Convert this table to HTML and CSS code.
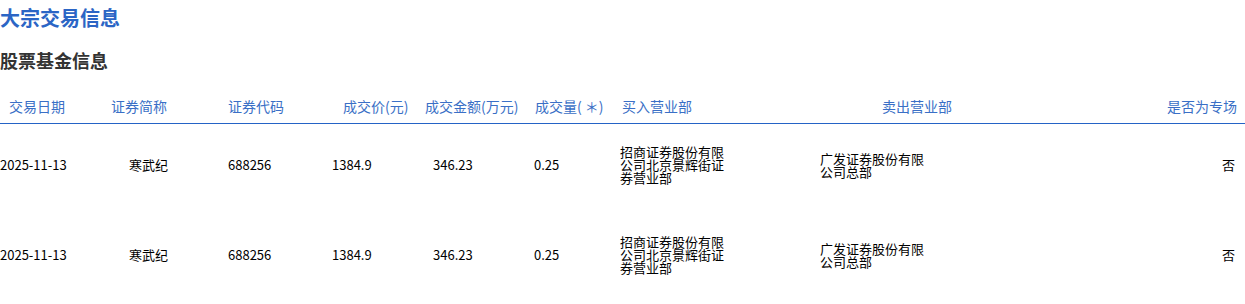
FILE: index.html
```html
<!DOCTYPE html>
<html lang="zh-CN">
<head>
<meta charset="utf-8">
<title>大宗交易信息</title>
<link rel="stylesheet" href="styles.css">
</head>
<body>
<h1 class="title">大宗交易信息</h1>
<h2 class="subtitle">股票基金信息</h2>
<table class="deals">
  <colgroup>
    <col class="w1"><col class="w2"><col class="w3"><col class="w4"><col class="w5"><col class="w6"><col class="w7"><col class="w8"><col class="w9">
  </colgroup>
  <thead>
    <tr>
      <th>交易日期</th>
      <th>证券简称</th>
      <th>证券代码</th>
      <th>成交价(元)</th>
      <th>成交金额(万元)</th>
      <th>成交量( ＊)</th>
      <th>买入营业部</th>
      <th>卖出营业部</th>
      <th>是否为专场</th>
    </tr>
  </thead>
  <tbody>
    <tr>
      <td>2025-11-13</td>
      <td>寒武纪</td>
      <td>688256</td>
      <td>1384.9</td>
      <td>346.23</td>
      <td>0.25</td>
      <td><div class="wrap">招商证券股份有限公司北京景辉街证券营业部</div></td>
      <td><div class="wrap">广发证券股份有限公司总部</div></td>
      <td>否</td>
    </tr>
    <tr>
      <td>2025-11-13</td>
      <td>寒武纪</td>
      <td>688256</td>
      <td>1384.9</td>
      <td>346.23</td>
      <td>0.25</td>
      <td><div class="wrap">招商证券股份有限公司北京景辉街证券营业部</div></td>
      <td><div class="wrap">广发证券股份有限公司总部</div></td>
      <td>否</td>
    </tr>
  </tbody>
</table>
</body>
</html>
```
FILE: styles.css
```css
html, body {
  margin: 0;
  padding: 0;
  background: #ffffff;
}
body {
  font-family: "Noto Sans CJK SC", "Noto Sans", sans-serif;
  color: #000;
}
.title {
  margin: 0;
  font-size: 20px;
  line-height: 35px;
  font-weight: 700;
  color: #2b65c5;
}
.subtitle {
  margin: 0;
  padding-top: 13px;
  font-size: 18px;
  line-height: 25px;
  font-weight: 700;
  color: #333333;
}
.deals {
  width: 1245px;
  table-layout: fixed;
  border-collapse: collapse;
  border-spacing: 0;
}
.w1 { width: 100px; }
.w2 { width: 115px; }
.w3 { width: 105px; }
.w4 { width: 100px; }
.w5 { width: 107px; }
.w6 { width: 85px; }
.w7 { width: 168px; }
.w8 { width: 220px; }
.w9 { width: 245px; }

.deals thead tr {
  border-bottom: 1px solid #2463c6;
}
.deals th {
  padding: 23px 0 7px;
  font-size: 14px;
  line-height: 20px;
  font-weight: 400;
  color: #3a6fc6;
  text-align: left;
  white-space: nowrap;
}
.deals th:nth-child(1) { padding-left: 9px; }
.deals th:nth-child(2) { padding-left: 11px; }
.deals th:nth-child(3) { padding-left: 13px; }
.deals th:nth-child(4) { padding-left: 23px; }
.deals th:nth-child(5) { padding-left: 5px; }
.deals th:nth-child(6) { padding-left: 8px; }
.deals th:nth-child(7) { padding-left: 10px; }
.deals th:nth-child(8) { padding-left: 102px; }
.deals th:nth-child(9) { text-align: right; padding-right: 8px; }

.deals tbody tr {
  height: 90px;
}
.deals td {
  padding: 0 0 8px;
  font-size: 13px;
  line-height: 13px;
  color: #000;
  text-align: left;
  vertical-align: middle;
}
.deals td:nth-child(1) { padding-left: 0; }
.deals td:nth-child(2) { padding-left: 29px; }
.deals td:nth-child(3) { padding-left: 13px; }
.deals td:nth-child(4) { padding-left: 12px; }
.deals td:nth-child(5) { padding-left: 13px; }
.deals td:nth-child(6) { padding-left: 7px; }
.deals td:nth-child(7) { padding-left: 8px; }
.deals td:nth-child(8) { padding-left: 40px; }
.deals td:nth-child(9) { text-align: right; padding-right: 10px; }

.wrap {
  width: 104px;
  word-break: break-all;
}
```
